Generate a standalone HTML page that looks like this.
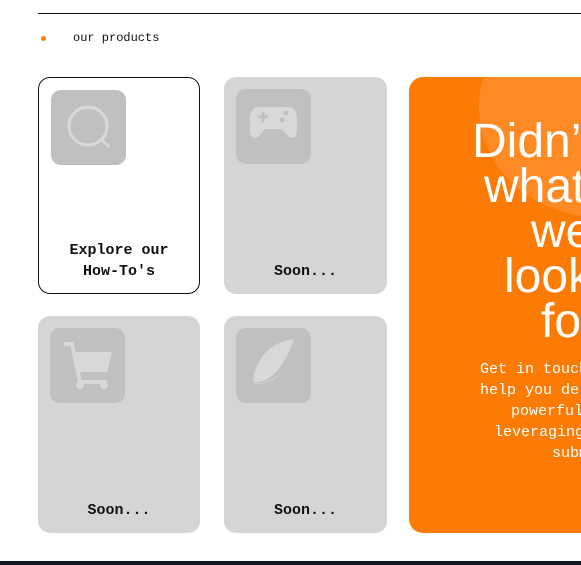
<!DOCTYPE html>
<html><head><style>
html,body{margin:0;padding:0;width:581px;height:565px;overflow:hidden;background:#fff;font-family:"Liberation Mono",monospace}
.wrap{position:relative;width:581px;height:565px;overflow:hidden}
.abs{position:absolute}
.line{left:38px;top:13px;width:543px;height:1px;background:#111}
.dot{left:41px;top:36px;width:5px;height:5px;border-radius:50%;background:#fb7b05}
.lbl{left:73px;top:31px;font-size:12px;color:#111}
.card{position:absolute;width:163px;height:217px;border-radius:12px;background:#d5d5d5;box-sizing:border-box}
.card.w{width:162px;background:#fff;border:1px solid #111}
.ib{position:absolute;left:12px;top:12px;width:75px;height:75px;border-radius:10px;background:#c0c0c0}
.t{position:absolute;left:0;right:0;text-align:center;font-weight:bold;font-size:15px;color:#111;line-height:21px}
.or{left:409px;top:77px;width:172px;height:456px;border-radius:14px 0 0 14px;background:#fb7b05;overflow:hidden}
.circ{position:absolute;left:70px;top:-80px;width:240px;height:220px;border-radius:50%;background:#fd8a22}
.hl{position:absolute;color:#fff;font-family:"Liberation Sans",sans-serif;font-size:48px;line-height:45px;white-space:nowrap}
.pl{position:absolute;color:#fff;font-size:15px;line-height:21px;white-space:nowrap}
.bar{left:0;top:561px;width:581px;height:4px;background:#111827}
</style></head><body><div class="wrap">
<div class="abs line"></div>
<div class="abs dot"></div>
<div class="abs lbl">our products</div>

<div class="card w" style="left:38px;top:77px">
 <div class="ib"><svg width="75" height="75" viewBox="0 0 75 75"><circle cx="37" cy="36" r="19" fill="none" stroke="#d8d8d8" stroke-width="3"/><line x1="51" y1="50" x2="58" y2="57" stroke="#d8d8d8" stroke-width="3"/></svg></div>
 <div class="t" style="top:162px">Explore our<br>How-To's</div>
</div>
<div class="card" style="left:224px;top:77px">
 <div class="ib"><svg width="75" height="75" viewBox="0 0 75 75"><path d="M24 18 Q14 18 14 30 L14 41 Q14 51 22 48 L29 40 L46 40 L53 48 Q61 51 61 41 L61 30 Q61 18 51 18 Z" fill="#d8d8d8"/><path d="M27 23v10M22 28h10" stroke="#c0c0c0" stroke-width="3"/><circle cx="50" cy="24" r="2.5" fill="#c0c0c0"/><circle cx="46" cy="31" r="2.5" fill="#c0c0c0"/></svg></div>
 <div class="t" style="top:184px">Soon...</div>
</div>
<div class="card" style="left:38px;top:316px;width:162px">
 <div class="ib"><svg width="75" height="75" viewBox="0 0 75 75"><path d="M14 16h8l8 38h27" fill="none" stroke="#d8d8d8" stroke-width="4"/><path d="M24 24h38l-5 20H28z" fill="#d8d8d8"/><circle cx="30" cy="57" r="4" fill="#d8d8d8"/><circle cx="54" cy="57" r="4" fill="#d8d8d8"/></svg></div>
 <div class="t" style="top:184px">Soon...</div>
</div>
<div class="card" style="left:224px;top:316px">
 <div class="ib"><svg width="75" height="75" viewBox="0 0 75 75"><path d="M58 11 Q30 15 20 40 Q16 48 18 54 Q28 56 40 44 Q52 30 58 11Z" fill="#d8d8d8"/><path d="M18 55 Q30 58 44 46" fill="none" stroke="#d0d0d0" stroke-width="1"/></svg></div>
 <div class="t" style="top:184px">Soon...</div>
</div>

<div class="abs or"><div class="circ"></div></div>
<div class="hl" style="left:472px;top:119px">Didn’t find</div>
<div class="hl" style="left:484px;top:164px">what you</div>
<div class="hl" style="left:531px;top:209px">were</div>
<div class="hl" style="left:504px;top:254px">looking</div>
<div class="hl" style="left:541px;top:299px">for?</div>
<div class="pl" style="left:480px;top:359px">Get in touch, we'll</div>
<div class="pl" style="left:480px;top:380px">help you deliver a</div>
<div class="pl" style="left:511px;top:401px">powerful app,</div>
<div class="pl" style="left:494px;top:422px">leveraging our</div>
<div class="pl" style="left:552px;top:443px">submodules</div>
<div class="abs bar"></div>
</div></body></html>
